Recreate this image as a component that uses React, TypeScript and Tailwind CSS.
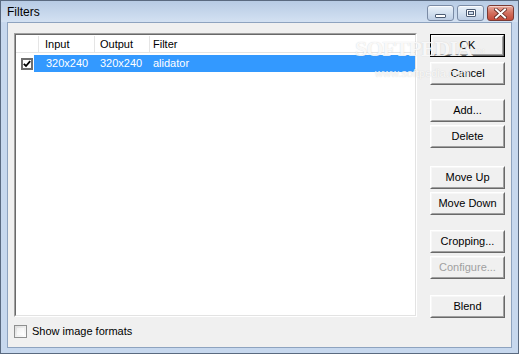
import React from "react";

const font = "font-['Liberation_Sans',Arial,sans-serif]";

function Button({
  label,
  isDefault,
  disabled,
  className = "",
}: {
  label: string;
  isDefault?: boolean;
  disabled?: boolean;
  className?: string;
}) {
  const face = (
    <div className="flex h-full border border-t-white border-l-white border-r-[#696969] border-b-[#696969]">
      <div className="flex flex-1 items-center justify-center border border-t-[#f7f7f7] border-l-[#f7f7f7] border-r-[#a0a0a0] border-b-[#a0a0a0] bg-[#f0f0f0]">
        <span className={disabled ? "text-[#a0a0a0]" : "text-black"}>{label}</span>
      </div>
    </div>
  );
  return (
    <div className={`h-[23px] w-[75px] shrink-0 text-[11px] ${className}`}>
      {isDefault ? <div className="h-full border border-black">{face}</div> : face}
    </div>
  );
}

function CaptionButton({ kind }: { kind: "min" | "max" | "close" }) {
  if (kind === "close") {
    return (
      <div className="flex h-[16px] w-[27px] items-center justify-center rounded-[3px] border border-[#7b3a33] bg-gradient-to-b from-[#e9a99c] via-[#d2705f] to-[#c34a3a] shadow-[inset_0_1px_0_rgba(255,255,255,0.5)]">
        <svg width="13" height="11" viewBox="0 0 13 11">
          <path d="M2 1.5 L11 9.5 M11 1.5 L2 9.5" stroke="#5b2620" strokeWidth="3.6" strokeLinecap="square" />
          <path d="M2 1.5 L11 9.5 M11 1.5 L2 9.5" stroke="#ffffff" strokeWidth="2" strokeLinecap="square" />
        </svg>
      </div>
    );
  }
  return (
    <div className="flex h-[16px] w-[27px] items-center justify-center rounded-[3px] border border-[#7a8ba5] bg-gradient-to-b from-[#eaf1f9] via-[#d4e1f0] to-[#bccde4] shadow-[inset_0_1px_0_rgba(255,255,255,0.8)]">
      {kind === "min" ? (
        <div className="mt-[5px] h-[4px] w-[11px] rounded-[1px] border border-[#4c5c74] bg-white" />
      ) : (
        <div className="h-[8px] w-[10px] rounded-[1px] border border-[#4c5c74] bg-white p-[1px]">
          <div className="h-full w-full border border-[#4c5c74] bg-[#cfdcec]" />
        </div>
      )}
    </div>
  );
}

export default function App() {
  return (
    <div
      className={`relative flex h-[354px] w-[519px] flex-col overflow-hidden border border-[#5a6a80] bg-[#c7d8ee] ${font}`}
    >
      {/* title bar */}
      <div className="flex h-[21px] items-center bg-gradient-to-b from-[#b7cbe4] to-[#d3e1f2]">
        <span className="ml-[6px] text-[12px] text-black">Filters</span>
        <div className="ml-auto mr-[4px] mt-[3px] flex gap-[3px]">
          <CaptionButton kind="min" />
          <CaptionButton kind="max" />
          <CaptionButton kind="close" />
        </div>
      </div>

      {/* client area */}
      <div className="mx-[6px] flex h-[326px] flex-col border border-[#8ea3bf] bg-[#f0f0f0] px-[6px] pt-[10px] text-[11px]">
        <div className="flex h-[284px] items-start">
          {/* list view */}
          <div className="flex h-[284px] w-[404px] border border-t-[#a0a0a0] border-l-[#a0a0a0] border-r-white border-b-white">
            <div className="flex flex-1 flex-col border border-t-[#696969] border-l-[#696969] border-r-[#e3e3e3] border-b-[#e3e3e3] bg-white">
              <div className="flex h-[18px] items-center border-b border-[#e5e5e5] pt-[1px] text-black">
                <div className="h-full w-[23px] border-r border-[#e5e5e5]" />
                <div className="flex h-full w-[56px] items-center border-r border-[#e5e5e5] pl-[6px]">Input</div>
                <div className="flex h-full w-[55px] items-center border-r border-[#e5e5e5] pl-[5px]">Output</div>
                <div className="flex h-full flex-1 items-center pl-[3px]">Filter</div>
              </div>
              <div className="mt-[2px] flex h-[17px]">
                <div className="flex w-[17px] items-center justify-end">
                  <div className="flex h-[12px] w-[12px] items-center justify-center border-2 border-[#6e6e6e] bg-white">
                    <svg width="8" height="8" viewBox="0 0 8 8">
                      <path d="M0.8 3.8 L3 6 L7.2 1.2" stroke="#000" strokeWidth="1.8" fill="none" />
                    </svg>
                  </div>
                </div>
                <div className="ml-[1px] flex flex-1 items-center bg-[#3399ff] text-white">
                  <span className="w-[66px] pl-[12px]">320x240</span>
                  <span className="w-[53px]">320x240</span>
                  <span>alidator</span>
                </div>
              </div>
            </div>
          </div>

          {/* buttons */}
          <div className="ml-[13px] mt-[1px] flex flex-col">
            <Button label="OK" isDefault />
            <Button label="Cancel" className="mt-[5px]" />
            <Button label="Add..." className="mt-[14px]" />
            <Button label="Delete" className="mt-[3px]" />
            <Button label="Move Up" className="mt-[18px]" />
            <Button label="Move Down" className="mt-[3px]" />
            <Button label="Cropping..." className="mt-[15px]" />
            <Button label="Configure..." disabled className="mt-[3px]" />
            <Button label="Blend" className="mt-[16px]" />
          </div>
        </div>

        <div className="mt-[6px] flex items-center">
          <div className="h-[13px] w-[13px] border border-[#8e8f8f] bg-gradient-to-br from-[#dcdcdc] to-white p-[2px]">
            <div className="h-full w-full bg-gradient-to-br from-[#f0f0f0] to-white" />
          </div>
          <span className="ml-[5px] text-black">Show image formats</span>
        </div>
      </div>

      {/* watermark overlay */}
      <div className="pointer-events-none absolute left-[354px] top-[37px] font-['Liberation_Serif',serif] text-[22px] font-bold leading-none tracking-[-1px] text-white/85 [text-shadow:0_0_1px_rgba(120,120,120,0.35)]">
        SOFTPEDIA<sup className="ml-[2px] text-[7px] font-normal tracking-normal">TM</sup>
      </div>
      <div className="pointer-events-none absolute left-[374px] top-[67px] text-[11px] leading-none text-white/85 [text-shadow:0_0_1px_rgba(120,120,120,0.35)]">
        www.softpedia.com
      </div>
    </div>
  );
}
